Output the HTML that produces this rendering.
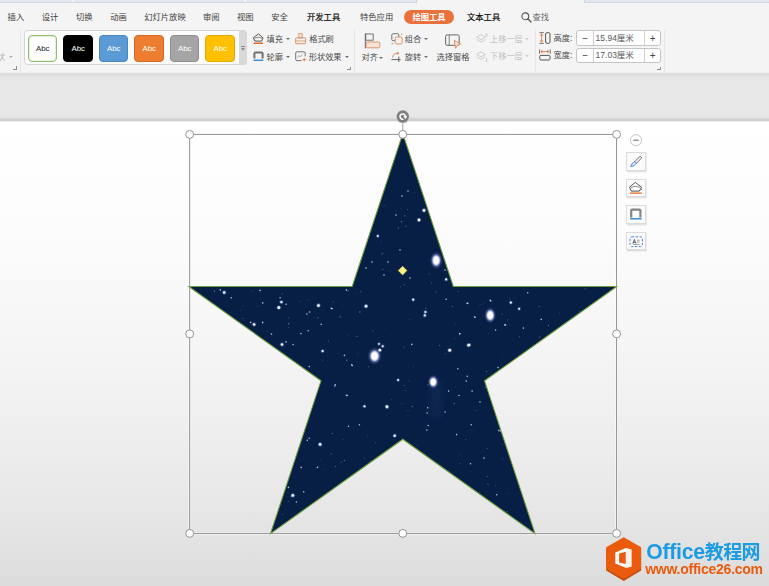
<!DOCTYPE html>
<html lang="zh-CN">
<head>
<meta charset="utf-8">
<title>WPS 演示 - 绘图工具</title>
<style>
html,body{margin:0;padding:0}
body{width:769px;height:586px;overflow:hidden;position:relative;background:#e8e8e8;
 font-family:"Liberation Sans","Noto Sans CJK SC",sans-serif;color:#3c3c3c;-webkit-font-smoothing:antialiased}
.abs,.t,.m,.sw,.sep,.dd,.dl{position:absolute}
#ribbon{left:0;top:0;width:769px;height:72.3px;background:#f4f4f4}
.strip{top:0;height:2.7px;background:linear-gradient(#e3e7f2 0,#e3e7f2 1.7px,#cdd3e3 2.2px,#d6dbe8 2.7px)}
.tick{top:0;width:1.6px;height:1.5px;background:#f6f7fb}
#bg{left:0;top:72px;width:769px;height:514px;background:linear-gradient(to bottom,#f4f4f4 0,#f4f4f4 .3px,#d9d9d9 1.6px,#e0e0e0 3.5px,#e7e7e7 6px,#e7e7e7 44.8px,#d8d8d8 46.8px,#c6c6c6 48.3px,#f0f0f0 49.5px,#fff 50.4px,#fcfcfc 158px,#f5f5f5 277px,#ededed 377px,#e7e7e7 436px,#dcdcdc 514px)}
/* menu */
.m{top:11px;height:12px;line-height:12px;font-size:8.3px;white-space:nowrap;color:#3c3c3c}
.m.b{font-weight:400;color:#0a0a0a;-webkit-text-stroke:.18px #0a0a0a}
#pill{left:404px;top:9.5px;width:50px;height:14px;border-radius:7px;background:#e8713c}
#pill span{position:absolute;left:0;width:50px;text-align:center;top:1px;line-height:12px;font-size:8.3px;font-weight:bold;color:#fff;white-space:nowrap}
/* ribbon labels */
.t{height:12px;line-height:12px;font-size:8.2px;white-space:nowrap;color:#4a4a4a;margin-top:.7px}
.t.g{color:#c2c2c2}
.sep{width:1px;top:30px;height:41px;background:#e6e6e6}
.dd{width:0;height:0;border-left:2px solid transparent;border-right:2px solid transparent;border-top:2.3px solid #6c6c6c}
.dd.g{border-top-color:#ccc}
.dl{width:2.8px;height:2.6px;border-right:1px solid #8c8c8c;border-bottom:1px solid #8c8c8c;border-radius:0 0 1px 0}
/* gallery */
#gal{left:24px;top:30.2px;width:223px;height:35px;box-sizing:border-box;border:1px solid #d4d4d4;border-radius:4px;background:#fcfcfc}
#galsb{left:239px;top:30.2px;width:8px;height:35px;background:#d9d9d9;border-radius:0 4px 4px 0}
.sw{top:34.8px;width:29.6px;height:27px;box-sizing:border-box;border-radius:4px;border:1px solid;text-align:center;line-height:25.4px;font-size:7.9px;color:#fff}
/* spinners */
.spin{position:absolute;left:576px;width:84.6px;height:15.6px;box-sizing:border-box;border:1px solid #c4c4c4;border-radius:3px;background:#fff}
.spin i{position:absolute;top:0;width:1px;height:13.6px;background:#d0d0d0}
.spin b{position:absolute;top:1.2px;height:13.2px;line-height:12.5px;font-weight:normal;font-size:10px;color:#444;width:15px;text-align:center}
.spin span{position:absolute;left:18.6px;top:.5px;height:13.2px;line-height:13.6px;font-size:8.5px;color:#585858;white-space:nowrap}
/* floating buttons */
.fb{position:absolute;left:626.4px;width:19.4px;height:18.4px;box-sizing:border-box;background:#fbfbfb;border:1px solid #dcdcdc;box-shadow:0.5px 1px 1.5px rgba(0,0,0,.18)}
.fb svg{position:absolute;left:0;top:0}
svg{overflow:visible}
</style>
</head>
<body>
<div id="bg" class="abs"></div>
<div id="ribbon" class="abs">
 <div class="abs strip" style="left:0;width:416px;border-right:1px solid #cdd3e3"></div>
 <div class="abs strip" style="left:584px;width:185px;border-left:1px solid #cdd3e3"></div>
 <div class="abs tick" style="left:72px"></div>
 <div class="abs tick" style="left:244px"></div>

 <!-- menu tabs -->
 <div class="m" style="left:7.6px">插入</div>
 <div class="m" style="left:41.8px">设计</div>
 <div class="m" style="left:76px">切换</div>
 <div class="m" style="left:110.2px">动画</div>
 <div class="m" style="left:144.2px">幻灯片放映</div>
 <div class="m" style="left:203px">审阅</div>
 <div class="m" style="left:237px">视图</div>
 <div class="m" style="left:271.3px">安全</div>
 <div class="m b" style="left:307px">开发工具</div>
 <div class="m" style="left:360px">特色应用</div>
 <div id="pill" class="abs"><span>绘图工具</span></div>
 <div class="m b" style="left:467px">文本工具</div>
 <svg class="abs" style="left:521px;top:11.5px" width="11" height="11" viewBox="0 0 11 11"><circle cx="4.3" cy="4.3" r="3.4" fill="none" stroke="#555" stroke-width="1.1"/><path d="M6.8 6.8 L10 10" stroke="#555" stroke-width="1.3" stroke-linecap="round"/></svg>
 <div class="m" style="left:532.4px;color:#6a6a6a">查找</div>

 <!-- left fragment -->
 <div class="t g" style="left:-3px;top:51px;color:#b4b4b4">状</div>
 <div class="dd g" style="left:8.8px;top:56px;border-top-color:#b0b0b0"></div>
 <div class="dl" style="left:13.2px;top:66.4px"></div>
 <div class="sep" style="left:20.1px"></div>

 <!-- style gallery -->
 <div id="gal" class="abs"></div>
 <div id="galsb" class="abs"></div>
 <svg class="abs" style="left:241px;top:45.5px" width="4" height="6" viewBox="0 0 4 6"><path d="M0 0.5H4" stroke="#777" stroke-width="0.8"/><path d="M0 2.2H4L2 4.6Z" fill="#777"/></svg>
 <div class="sw" style="left:27.9px;background:#fff;border-color:#8fc170;color:#222;box-shadow:inset 0 0 0 .8px #dcedd3">Abc</div>
 <div class="sw" style="left:63.4px;background:#000;border-color:#000">Abc</div>
 <div class="sw" style="left:98.9px;background:#5b9bd5;border-color:#4a87c2">Abc</div>
 <div class="sw" style="left:134.4px;background:#ed7d31;border-color:#d46a22">Abc</div>
 <div class="sw" style="left:169.9px;background:#a5a5a5;border-color:#8e8e8e">Abc</div>
 <div class="sw" style="left:205.4px;background:#ffc000;border-color:#e0a800">Abc</div>

 <!-- fill / outline / format painter / effects -->
 <svg class="abs" style="left:253px;top:32.5px" width="11" height="11" viewBox="0 0 11 11"><path d="M5.6 0.9 L10.1 5 L8.6 8.1 L1.9 8.1 L0.3 4.7 Z" fill="none" stroke="#555" stroke-width="1" stroke-linejoin="round"/><path d="M1.6 5.2 Q5 3.2 9 5.2" fill="none" stroke="#666" stroke-width="0.8"/><rect x="0.5" y="9.4" width="9.6" height="1.5" rx="0.5" fill="#ee6a1e"/></svg>
 <div class="t" style="left:266.6px;top:33.2px">填充</div>
 <div class="dd" style="left:286.2px;top:38px"></div>
 <svg class="abs" style="left:295.3px;top:32.5px" width="11" height="11" viewBox="0 0 11 11"><rect x="3.9" y="0.7" width="3.2" height="4.2" fill="none" stroke="#d68a5c" stroke-width="0.9"/><rect x="0.7" y="4.9" width="9.9" height="5.8" rx="0.6" fill="none" stroke="#d68a5c" stroke-width="0.9"/><path d="M0.7 8H10.6" stroke="#d68a5c" stroke-width="0.8"/></svg>
 <div class="t" style="left:309.2px;top:33.2px">格式刷</div>

 <svg class="abs" style="left:253px;top:51px" width="11" height="11" viewBox="0 0 11 11"><path d="M1.4 7.4 V2.4 Q1.4 1.4 2.4 1.4 H8.6 Q9.6 1.4 9.6 2.4 V7.4" fill="none" stroke="#707070" stroke-width="2"/><rect x="0.5" y="8.4" width="9.8" height="1.6" rx="0.5" fill="#3c8cdc"/></svg>
 <div class="t" style="left:266.6px;top:51px">轮廓</div>
 <div class="dd" style="left:286.2px;top:56px"></div>
 <svg class="abs" style="left:295.3px;top:51px" width="12" height="11" viewBox="0 0 12 11"><path d="M6.5 9.6 H1.9 Q0.7 9.6 0.7 8.4 V2 Q0.7 0.8 1.9 0.8 H9 Q10.2 0.8 10.2 2 V5.4" fill="none" stroke="#666" stroke-width="0.9"/><path d="M2.2 6.6 L4 4.6 L5.4 6 L7.2 3.6" fill="none" stroke="#888" stroke-width="0.7"/><path d="M9.2 6.4 L9.8 8 L11.4 8.6 L9.8 9.2 L9.2 10.8 L8.6 9.2 L7 8.6 L8.6 8 Z" fill="#e0763c"/></svg>
 <div class="t" style="left:308.8px;top:51px">形状效果</div>
 <div class="dd" style="left:344.6px;top:56px"></div>
 <div class="dl" style="left:347.2px;top:66.5px"></div>
 <div class="sep" style="left:354.2px"></div>

 <!-- align -->
 <svg class="abs" style="left:364px;top:32.5px" width="17" height="16" viewBox="0 0 17 16"><path d="M1.3 0.4 V15.4" stroke="#666" stroke-width="1"/><rect x="1.8" y="1" width="7.4" height="6.2" fill="none" stroke="#666" stroke-width="0.9"/><rect x="2.2" y="9" width="13.6" height="5.8" rx="1.2" fill="#f7e3d6" stroke="#d68a5c" stroke-width="0.9"/></svg>
 <div class="t" style="left:361.6px;top:51.6px">对齐</div>
 <div class="dd" style="left:379.4px;top:56.6px"></div>

 <!-- group / rotate -->
 <svg class="abs" style="left:391px;top:32.8px" width="12" height="12" viewBox="0 0 12 12"><rect x="0.8" y="0.7" width="7" height="7" rx="1.3" fill="none" stroke="#666" stroke-width="0.9"/><rect x="4.2" y="4" width="7" height="7" rx="1.3" fill="#fbf1ea" stroke="#d68a5c" stroke-width="0.9"/><circle cx="1.2" cy="10.6" r="0.6" fill="#666"/><circle cx="10.6" cy="1.2" r="0.6" fill="#d68a5c"/></svg>
 <div class="t" style="left:404.8px;top:33.3px">组合</div>
 <div class="dd" style="left:424.4px;top:38px"></div>
 <svg class="abs" style="left:391px;top:50.5px" width="12" height="12" viewBox="0 0 12 12"><path d="M1.6 6.6 Q2 2.2 7 2.2" fill="none" stroke="#d68a5c" stroke-width="1"/><path d="M6.2 0.5 L8.4 2.2 L6.2 3.9 Z" fill="#d68a5c"/><path d="M0.4 8.6 H9.6 M7.8 5.6 V11" stroke="#555" stroke-width="0.9"/></svg>
 <div class="t" style="left:404.8px;top:51.2px">旋转</div>
 <div class="dd" style="left:424.4px;top:56.2px"></div>

 <!-- selection pane -->
 <svg class="abs" style="left:445px;top:34px" width="17" height="16" viewBox="0 0 17 16"><rect x="0.6" y="0.9" width="13.6" height="10.4" rx="1.6" fill="none" stroke="#666" stroke-width="1"/><path d="M4.2 1V11.2" stroke="#666" stroke-width="0.8"/><path d="M9.2 6.2 L15.6 10.2 L12.4 11.2 L10.6 14.4 Z" fill="#f7e3d6" stroke="#d68a5c" stroke-width="0.9" stroke-linejoin="round"/></svg>
 <div class="t" style="left:436.6px;top:51.7px">选择窗格</div>

 <!-- layers -->
 <svg class="abs" style="left:475.6px;top:32.6px" width="13" height="12" viewBox="0 0 13 12"><path d="M5 1.6 L9.4 4.2 L5 6.8 L0.8 4.2 Z" fill="none" stroke="#cacaca" stroke-width="0.9"/><path d="M0.8 6.6 L5 9.2 L9.4 6.6" fill="none" stroke="#cacaca" stroke-width="0.9"/><path d="M10.6 4.4 V0.8 M9.4 2 L10.6 0.7 L11.8 2" fill="none" stroke="#cacaca" stroke-width="0.8"/></svg>
 <div class="t g" style="left:490px;top:33.5px">上移一层</div>
 <div class="dd g" style="left:525.4px;top:38.2px"></div>
 <svg class="abs" style="left:475.6px;top:50.6px" width="13" height="12" viewBox="0 0 13 12"><path d="M5 0.8 L9.4 3.4 L5 6 L0.8 3.4 Z" fill="none" stroke="#cacaca" stroke-width="0.9"/><path d="M0.8 5.8 L5 8.4 L9.4 5.8" fill="none" stroke="#cacaca" stroke-width="0.9"/><path d="M10.6 7 V10.8 M9.4 9.6 L10.6 10.9 L11.8 9.6" fill="none" stroke="#cacaca" stroke-width="0.8"/></svg>
 <div class="t g" style="left:490px;top:50.5px">下移一层</div>
 <div class="dd g" style="left:525.4px;top:55.4px"></div>
 <div class="sep" style="left:535px;top:29px;height:42px"></div>

 <!-- size -->
 <svg class="abs" style="left:539px;top:32px" width="12" height="12" viewBox="0 0 12 12"><path d="M0.4 0.6 H4.8 M0.4 11.4 H4.8" stroke="#666" stroke-width="0.9"/><path d="M2.6 2 V10" stroke="#e0763c" stroke-width="0.9"/><path d="M1.2 3.6 L2.6 1.8 L4 3.6 M1.2 8.4 L2.6 10.2 L4 8.4" fill="none" stroke="#e0763c" stroke-width="0.9"/><rect x="6.6" y="0.7" width="4.4" height="10.6" rx="1.3" fill="none" stroke="#555" stroke-width="1"/></svg>
 <div class="t" style="left:553.6px;top:32.8px">高度:</div>
 <svg class="abs" style="left:539px;top:49.2px" width="12" height="12" viewBox="0 0 12 12"><path d="M0.6 0.4 V4.8 M11.2 0.4 V4.8" stroke="#666" stroke-width="0.9"/><path d="M2 2.6 H9.8" stroke="#e0763c" stroke-width="0.9"/><path d="M3.6 1.2 L1.8 2.6 L3.6 4 M8.2 1.2 L10 2.6 L8.2 4" fill="none" stroke="#e0763c" stroke-width="0.9"/><rect x="0.7" y="6.4" width="10.4" height="4.6" rx="1.3" fill="none" stroke="#555" stroke-width="1"/></svg>
 <div class="t" style="left:553.6px;top:49.4px">宽度:</div>

 <div class="spin" style="top:30.4px"><b style="left:0.6px">−</b><i style="left:15.6px"></i><span>15.94厘米</span><i style="left:67.4px"></i><b style="left:68.2px">+</b></div>
 <div class="spin" style="top:47.6px"><b style="left:0.6px">−</b><i style="left:15.6px"></i><span>17.03厘米</span><i style="left:67.4px"></i><b style="left:68.2px">+</b></div>
 <div class="dl" style="left:657px;top:66.5px"></div>
 <div class="sep" style="left:664.4px"></div>
</div>
<svg class="abs" style="left:0;top:0" width="769" height="586" viewBox="0 0 769 586">
<defs><radialGradient id="gl"><stop offset="0" stop-color="#fff"/><stop offset="0.36" stop-color="#fff"/><stop offset="0.5" stop-color="#d6dbf7" stop-opacity="0.92"/><stop offset="0.7" stop-color="#7a80c6" stop-opacity="0.5"/><stop offset="1" stop-color="#39407a" stop-opacity="0"/></radialGradient>
<filter id="b1" x="-5%" y="-5%" width="110%" height="110%"><feGaussianBlur stdDeviation="0.4"/></filter><filter id="b2" x="-50%" y="-50%" width="200%" height="200%"><feGaussianBlur stdDeviation="3"/></filter>
<clipPath id="sc"><polygon points="402.8,133.7 453.3,286.5 616.8,286.5 484.5,380.8 535.0,533.6 402.8,439.2 270.5,533.6 321.0,380.8 188.7,286.5 352.2,286.5"/></clipPath></defs>
<rect x="189.66" y="134.40" width="426.90" height="399.03" fill="none" stroke="#fff" stroke-opacity="0.55" stroke-width="2.8"/>
<path d="M402.8 134.4 V117" stroke="#a0a0a0" stroke-width="1"/>
<polygon points="402.8,133.7 453.3,286.5 616.8,286.5 484.5,380.8 535.0,533.6 402.8,439.2 270.5,533.6 321.0,380.8 188.7,286.5 352.2,286.5" fill="#071f45" stroke="#6f9f3a" stroke-width="1.05" stroke-linejoin="miter"/>
<g clip-path="url(#sc)">
<ellipse cx="436" cy="398" rx="7" ry="22" fill="#2a4474" opacity="0.22" filter="url(#b2)"/>
<g filter="url(#b1)">
<circle cx="418.1" cy="279.9" r="0.37" fill="#b9c6e4" opacity="0.43"/>
<circle cx="435.8" cy="292.3" r="0.69" fill="#b9c6e4" opacity="0.27"/>
<circle cx="320.8" cy="460.1" r="0.41" fill="#b9c6e4" opacity="0.45"/>
<circle cx="480.0" cy="304.7" r="0.46" fill="#b9c6e4" opacity="0.45"/>
<circle cx="382.7" cy="253.6" r="0.63" fill="#b9c6e4" opacity="0.49"/>
<circle cx="367.7" cy="436.5" r="0.40" fill="#b9c6e4" opacity="0.42"/>
<circle cx="486.4" cy="371.4" r="0.55" fill="#b9c6e4" opacity="0.41"/>
<circle cx="391.7" cy="399.3" r="0.37" fill="#b9c6e4" opacity="0.50"/>
<circle cx="353.9" cy="401.1" r="0.36" fill="#b9c6e4" opacity="0.41"/>
<circle cx="307.9" cy="299.8" r="0.48" fill="#b9c6e4" opacity="0.56"/>
<circle cx="288.6" cy="327.6" r="0.56" fill="#b9c6e4" opacity="0.34"/>
<circle cx="346.8" cy="360.2" r="0.68" fill="#b9c6e4" opacity="0.49"/>
<circle cx="409.4" cy="380.7" r="0.59" fill="#b9c6e4" opacity="0.27"/>
<circle cx="356.7" cy="293.3" r="0.39" fill="#b9c6e4" opacity="0.47"/>
<circle cx="388.2" cy="327.2" r="0.38" fill="#b9c6e4" opacity="0.29"/>
<circle cx="414.8" cy="192.3" r="0.54" fill="#b9c6e4" opacity="0.26"/>
<circle cx="416.7" cy="445.2" r="0.47" fill="#b9c6e4" opacity="0.33"/>
<circle cx="285.8" cy="340.7" r="0.47" fill="#b9c6e4" opacity="0.26"/>
<circle cx="548.5" cy="325.4" r="0.58" fill="#b9c6e4" opacity="0.53"/>
<circle cx="509.8" cy="324.9" r="0.41" fill="#b9c6e4" opacity="0.53"/>
<circle cx="331.1" cy="453.9" r="0.69" fill="#b9c6e4" opacity="0.39"/>
<circle cx="338.7" cy="353.1" r="0.40" fill="#b9c6e4" opacity="0.25"/>
<circle cx="299.7" cy="301.3" r="0.40" fill="#b9c6e4" opacity="0.57"/>
<circle cx="340.2" cy="316.9" r="0.55" fill="#b9c6e4" opacity="0.57"/>
<circle cx="403.5" cy="346.4" r="0.53" fill="#b9c6e4" opacity="0.26"/>
<circle cx="262.5" cy="323.0" r="0.60" fill="#b9c6e4" opacity="0.44"/>
<circle cx="328.3" cy="341.0" r="0.54" fill="#b9c6e4" opacity="0.52"/>
<circle cx="519.3" cy="336.7" r="0.55" fill="#b9c6e4" opacity="0.52"/>
<circle cx="579.3" cy="311.0" r="0.56" fill="#b9c6e4" opacity="0.43"/>
<circle cx="408.0" cy="410.7" r="0.51" fill="#b9c6e4" opacity="0.44"/>
<circle cx="488.0" cy="484.2" r="0.68" fill="#b9c6e4" opacity="0.34"/>
<circle cx="240.8" cy="310.5" r="0.38" fill="#b9c6e4" opacity="0.33"/>
<circle cx="282.7" cy="514.6" r="0.49" fill="#b9c6e4" opacity="0.42"/>
<circle cx="257.8" cy="306.3" r="0.53" fill="#b9c6e4" opacity="0.37"/>
<circle cx="425.9" cy="309.8" r="0.36" fill="#b9c6e4" opacity="0.37"/>
<circle cx="455.8" cy="338.6" r="0.37" fill="#b9c6e4" opacity="0.59"/>
<circle cx="526.2" cy="522.3" r="0.39" fill="#b9c6e4" opacity="0.34"/>
<circle cx="433.0" cy="413.8" r="0.38" fill="#b9c6e4" opacity="0.27"/>
<circle cx="483.3" cy="303.8" r="0.38" fill="#b9c6e4" opacity="0.58"/>
<circle cx="460.3" cy="454.3" r="0.38" fill="#b9c6e4" opacity="0.55"/>
<circle cx="383.0" cy="269.3" r="0.54" fill="#b9c6e4" opacity="0.57"/>
<circle cx="414.3" cy="229.1" r="0.39" fill="#b9c6e4" opacity="0.31"/>
<circle cx="402.8" cy="204.8" r="0.47" fill="#b9c6e4" opacity="0.26"/>
<circle cx="502.5" cy="354.1" r="0.42" fill="#b9c6e4" opacity="0.42"/>
<circle cx="539.3" cy="306.5" r="0.52" fill="#b9c6e4" opacity="0.54"/>
<circle cx="357.0" cy="336.3" r="0.59" fill="#b9c6e4" opacity="0.59"/>
<circle cx="335.4" cy="466.5" r="0.60" fill="#b9c6e4" opacity="0.47"/>
<circle cx="362.0" cy="272.7" r="0.37" fill="#b9c6e4" opacity="0.30"/>
<circle cx="314.2" cy="317.4" r="0.41" fill="#b9c6e4" opacity="0.41"/>
<circle cx="391.9" cy="334.8" r="0.42" fill="#b9c6e4" opacity="0.43"/>
<circle cx="227.1" cy="293.5" r="0.36" fill="#b9c6e4" opacity="0.26"/>
<circle cx="439.4" cy="345.3" r="0.61" fill="#b9c6e4" opacity="0.48"/>
<circle cx="495.2" cy="485.2" r="0.49" fill="#b9c6e4" opacity="0.36"/>
<circle cx="502.9" cy="458.5" r="0.40" fill="#b9c6e4" opacity="0.43"/>
<circle cx="481.0" cy="411.0" r="0.43" fill="#b9c6e4" opacity="0.26"/>
<circle cx="427.8" cy="384.7" r="0.57" fill="#b9c6e4" opacity="0.49"/>
<circle cx="404.0" cy="347.7" r="0.58" fill="#b9c6e4" opacity="0.27"/>
<circle cx="400.2" cy="286.7" r="0.52" fill="#b9c6e4" opacity="0.49"/>
<circle cx="476.4" cy="410.5" r="0.59" fill="#b9c6e4" opacity="0.35"/>
<circle cx="409.8" cy="319.5" r="0.51" fill="#b9c6e4" opacity="0.29"/>
<circle cx="381.1" cy="241.1" r="0.42" fill="#b9c6e4" opacity="0.58"/>
<circle cx="539.8" cy="337.1" r="0.66" fill="#b9c6e4" opacity="0.50"/>
<circle cx="287.8" cy="492.7" r="0.52" fill="#b9c6e4" opacity="0.26"/>
<circle cx="381.7" cy="254.5" r="0.40" fill="#b9c6e4" opacity="0.37"/>
<circle cx="324.0" cy="469.7" r="0.35" fill="#b9c6e4" opacity="0.51"/>
<circle cx="348.0" cy="290.8" r="0.70" fill="#b9c6e4" opacity="0.46"/>
<circle cx="343.1" cy="304.9" r="0.45" fill="#b9c6e4" opacity="0.27"/>
<circle cx="407.4" cy="209.6" r="0.48" fill="#b9c6e4" opacity="0.58"/>
<circle cx="502.2" cy="314.0" r="0.61" fill="#b9c6e4" opacity="0.48"/>
<circle cx="390.8" cy="271.1" r="0.45" fill="#b9c6e4" opacity="0.51"/>
<circle cx="427.3" cy="291.4" r="0.41" fill="#b9c6e4" opacity="0.31"/>
<circle cx="401.5" cy="221.7" r="0.67" fill="#b9c6e4" opacity="0.60"/>
<circle cx="509.6" cy="298.8" r="0.49" fill="#b9c6e4" opacity="0.43"/>
<circle cx="404.2" cy="385.5" r="0.65" fill="#b9c6e4" opacity="0.33"/>
<circle cx="359.8" cy="312.0" r="0.68" fill="#b9c6e4" opacity="0.55"/>
<circle cx="412.3" cy="406.5" r="0.68" fill="#b9c6e4" opacity="0.50"/>
<circle cx="465.8" cy="439.5" r="0.51" fill="#b9c6e4" opacity="0.44"/>
<circle cx="288.3" cy="501.6" r="0.58" fill="#b9c6e4" opacity="0.36"/>
<circle cx="461.1" cy="413.1" r="0.39" fill="#b9c6e4" opacity="0.27"/>
<circle cx="413.2" cy="366.8" r="0.49" fill="#b9c6e4" opacity="0.33"/>
<circle cx="317.8" cy="317.9" r="0.69" fill="#b9c6e4" opacity="0.48"/>
<circle cx="402.0" cy="403.4" r="0.50" fill="#b9c6e4" opacity="0.34"/>
<circle cx="333.4" cy="301.9" r="0.59" fill="#b9c6e4" opacity="0.32"/>
<circle cx="404.8" cy="215.8" r="0.69" fill="#b9c6e4" opacity="0.36"/>
<circle cx="400.9" cy="208.6" r="0.43" fill="#b9c6e4" opacity="0.40"/>
<circle cx="251.4" cy="291.0" r="0.42" fill="#b9c6e4" opacity="0.59"/>
<circle cx="214.4" cy="291.0" r="0.66" fill="#b9c6e4" opacity="0.56"/>
<circle cx="341.4" cy="462.2" r="0.64" fill="#b9c6e4" opacity="0.40"/>
<circle cx="364.6" cy="458.3" r="0.62" fill="#b9c6e4" opacity="0.26"/>
<circle cx="508.6" cy="493.0" r="0.47" fill="#b9c6e4" opacity="0.35"/>
<circle cx="288.8" cy="323.7" r="0.68" fill="#b9c6e4" opacity="0.58"/>
<circle cx="372.8" cy="331.0" r="0.67" fill="#b9c6e4" opacity="0.31"/>
<circle cx="492.6" cy="312.4" r="0.43" fill="#b9c6e4" opacity="0.40"/>
<circle cx="454.3" cy="403.3" r="0.61" fill="#b9c6e4" opacity="0.55"/>
<circle cx="431.4" cy="282.9" r="0.61" fill="#b9c6e4" opacity="0.32"/>
<circle cx="436.3" cy="264.2" r="0.49" fill="#b9c6e4" opacity="0.60"/>
<circle cx="405.9" cy="226.2" r="0.63" fill="#b9c6e4" opacity="0.48"/>
<circle cx="559.5" cy="313.3" r="0.44" fill="#b9c6e4" opacity="0.52"/>
<circle cx="443.9" cy="381.6" r="0.43" fill="#b9c6e4" opacity="0.38"/>
<circle cx="357.9" cy="353.7" r="0.57" fill="#b9c6e4" opacity="0.28"/>
<circle cx="322.4" cy="360.3" r="0.48" fill="#b9c6e4" opacity="0.40"/>
<circle cx="370.1" cy="461.8" r="0.49" fill="#b9c6e4" opacity="0.56"/>
<circle cx="386.0" cy="198.7" r="0.36" fill="#b9c6e4" opacity="0.44"/>
<circle cx="347.5" cy="335.4" r="0.40" fill="#b9c6e4" opacity="0.35"/>
<circle cx="585.2" cy="288.8" r="0.67" fill="#b9c6e4" opacity="0.47"/>
<circle cx="282.1" cy="293.6" r="0.53" fill="#b9c6e4" opacity="0.38"/>
<circle cx="499.0" cy="492.5" r="0.36" fill="#b9c6e4" opacity="0.45"/>
<circle cx="445.4" cy="353.7" r="0.57" fill="#b9c6e4" opacity="0.36"/>
<circle cx="368.5" cy="366.7" r="0.50" fill="#b9c6e4" opacity="0.48"/>
<circle cx="380.0" cy="309.0" r="0.36" fill="#b9c6e4" opacity="0.47"/>
<circle cx="398.3" cy="227.8" r="0.62" fill="#b9c6e4" opacity="0.52"/>
<circle cx="384.9" cy="205.5" r="0.52" fill="#b9c6e4" opacity="0.29"/>
<circle cx="243.7" cy="305.9" r="0.38" fill="#b9c6e4" opacity="0.40"/>
<circle cx="407.1" cy="150.0" r="0.57" fill="#b9c6e4" opacity="0.28"/>
<circle cx="502.7" cy="444.7" r="0.53" fill="#b9c6e4" opacity="0.27"/>
<circle cx="404.4" cy="284.8" r="0.68" fill="#b9c6e4" opacity="0.30"/>
<circle cx="502.1" cy="459.6" r="0.42" fill="#b9c6e4" opacity="0.59"/>
<circle cx="405.3" cy="261.3" r="0.36" fill="#b9c6e4" opacity="0.31"/>
<circle cx="479.7" cy="491.8" r="0.41" fill="#b9c6e4" opacity="0.52"/>
<circle cx="458.3" cy="291.4" r="0.63" fill="#b9c6e4" opacity="0.34"/>
<circle cx="342.9" cy="439.5" r="0.50" fill="#b9c6e4" opacity="0.31"/>
<circle cx="439.5" cy="399.1" r="0.46" fill="#b9c6e4" opacity="0.25"/>
<circle cx="452.4" cy="306.5" r="0.53" fill="#b9c6e4" opacity="0.56"/>
<circle cx="455.8" cy="323.6" r="0.40" fill="#b9c6e4" opacity="0.58"/>
<circle cx="429.4" cy="273.8" r="0.58" fill="#b9c6e4" opacity="0.41"/>
<circle cx="295.1" cy="495.0" r="0.37" fill="#b9c6e4" opacity="0.44"/>
<circle cx="405.7" cy="390.3" r="0.63" fill="#b9c6e4" opacity="0.31"/>
<circle cx="507.7" cy="319.8" r="0.61" fill="#b9c6e4" opacity="0.41"/>
<circle cx="332.3" cy="433.5" r="0.59" fill="#b9c6e4" opacity="0.55"/>
<circle cx="425.8" cy="308.1" r="0.63" fill="#b9c6e4" opacity="0.43"/>
<circle cx="507.2" cy="511.5" r="0.61" fill="#b9c6e4" opacity="0.36"/>
<circle cx="291.1" cy="496.6" r="0.57" fill="#b9c6e4" opacity="0.49"/>
<circle cx="487.4" cy="476.6" r="0.50" fill="#b9c6e4" opacity="0.50"/>
<circle cx="432.9" cy="256.8" r="0.42" fill="#b9c6e4" opacity="0.47"/>
<circle cx="485.2" cy="387.2" r="0.59" fill="#b9c6e4" opacity="0.51"/>
<circle cx="344.3" cy="460.6" r="0.64" fill="#b9c6e4" opacity="0.56"/>
<circle cx="460.2" cy="463.6" r="0.57" fill="#b9c6e4" opacity="0.35"/>
<circle cx="325.3" cy="303.2" r="0.36" fill="#b9c6e4" opacity="0.34"/>
<circle cx="309.7" cy="419.9" r="0.48" fill="#b9c6e4" opacity="0.36"/>
<circle cx="375.5" cy="442.8" r="0.47" fill="#b9c6e4" opacity="0.50"/>
<circle cx="419.0" cy="220.3" r="0.65" fill="#b9c6e4" opacity="0.28"/>
<circle cx="267.7" cy="331.5" r="0.47" fill="#b9c6e4" opacity="0.54"/>
<circle cx="300.3" cy="511.2" r="0.45" fill="#b9c6e4" opacity="0.33"/>
<circle cx="488.1" cy="333.0" r="0.39" fill="#b9c6e4" opacity="0.47"/>
<circle cx="487.2" cy="448.4" r="0.57" fill="#b9c6e4" opacity="0.37"/>
<circle cx="360.5" cy="291.5" r="0.66" fill="#b9c6e4" opacity="0.28"/>
<circle cx="288.7" cy="318.0" r="0.54" fill="#b9c6e4" opacity="0.51"/>
<circle cx="472.1" cy="430.4" r="0.41" fill="#b9c6e4" opacity="0.40"/>
<circle cx="242.7" cy="318.5" r="0.66" fill="#b9c6e4" opacity="0.33"/>
<circle cx="489.7" cy="471.1" r="0.40" fill="#b9c6e4" opacity="0.30"/>
<circle cx="331.3" cy="308.4" r="0.8" fill="#cdd8ef" opacity="0.85"/>
<circle cx="411.8" cy="344.4" r="0.8" fill="#cdd8ef" opacity="0.85"/>
<circle cx="459.7" cy="333.7" r="0.8" fill="#cdd8ef" opacity="0.85"/>
<circle cx="467.8" cy="303.2" r="0.8" fill="#cdd8ef" opacity="0.85"/>
<circle cx="490.1" cy="300.3" r="0.8" fill="#cdd8ef" opacity="0.85"/>
<circle cx="510.4" cy="302.6" r="0.8" fill="#cdd8ef" opacity="0.85"/>
<circle cx="504.6" cy="325.0" r="0.8" fill="#cdd8ef" opacity="0.85"/>
<circle cx="475.0" cy="317.2" r="0.8" fill="#cdd8ef" opacity="0.85"/>
<circle cx="352.2" cy="365.6" r="0.8" fill="#cdd8ef" opacity="0.85"/>
<circle cx="334.8" cy="386.0" r="0.8" fill="#cdd8ef" opacity="0.85"/>
<circle cx="347.3" cy="395.5" r="0.8" fill="#cdd8ef" opacity="0.85"/>
<circle cx="427.7" cy="407.7" r="0.8" fill="#cdd8ef" opacity="0.85"/>
<circle cx="427.1" cy="413.0" r="0.8" fill="#cdd8ef" opacity="0.85"/>
<circle cx="426.9" cy="430.0" r="0.8" fill="#cdd8ef" opacity="0.85"/>
<circle cx="394.3" cy="436.2" r="0.8" fill="#cdd8ef" opacity="0.85"/>
<circle cx="307.3" cy="440.2" r="0.8" fill="#cdd8ef" opacity="0.85"/>
<circle cx="459.0" cy="395.5" r="0.8" fill="#cdd8ef" opacity="0.85"/>
<circle cx="466.3" cy="381.0" r="0.8" fill="#cdd8ef" opacity="0.85"/>
<circle cx="445.1" cy="412.0" r="0.8" fill="#cdd8ef" opacity="0.85"/>
<circle cx="480.0" cy="402.0" r="0.8" fill="#cdd8ef" opacity="0.85"/>
<circle cx="498.8" cy="430.4" r="0.8" fill="#cdd8ef" opacity="0.85"/>
<circle cx="309.2" cy="438.2" r="0.8" fill="#cdd8ef" opacity="0.85"/>
<circle cx="348.5" cy="426.2" r="0.8" fill="#cdd8ef" opacity="0.85"/>
<circle cx="359.4" cy="424.8" r="0.8" fill="#cdd8ef" opacity="0.85"/>
<circle cx="364.9" cy="406.6" r="0.8" fill="#cdd8ef" opacity="0.85"/>
<circle cx="428.2" cy="425.5" r="0.8" fill="#cdd8ef" opacity="0.85"/>
<circle cx="317.5" cy="467.4" r="0.8" fill="#cdd8ef" opacity="0.85"/>
<circle cx="301.2" cy="467.4" r="0.8" fill="#cdd8ef" opacity="0.85"/>
<circle cx="288.4" cy="487.4" r="0.8" fill="#cdd8ef" opacity="0.85"/>
<circle cx="303.7" cy="491.8" r="0.8" fill="#cdd8ef" opacity="0.85"/>
<circle cx="296.4" cy="502.0" r="0.8" fill="#cdd8ef" opacity="0.85"/>
<circle cx="456.6" cy="434.6" r="0.8" fill="#cdd8ef" opacity="0.85"/>
<circle cx="471.2" cy="424.8" r="0.8" fill="#cdd8ef" opacity="0.85"/>
<circle cx="500.3" cy="431.0" r="0.8" fill="#cdd8ef" opacity="0.85"/>
<circle cx="470.5" cy="463.7" r="0.8" fill="#cdd8ef" opacity="0.85"/>
<circle cx="496.7" cy="494.7" r="0.8" fill="#cdd8ef" opacity="0.85"/>
<circle cx="484.0" cy="458.0" r="0.8" fill="#cdd8ef" opacity="0.85"/>
<circle cx="446.2" cy="299.2" r="0.8" fill="#cdd8ef" opacity="0.85"/>
<circle cx="467.2" cy="303.4" r="0.8" fill="#cdd8ef" opacity="0.85"/>
<circle cx="490.7" cy="300.9" r="0.8" fill="#cdd8ef" opacity="0.85"/>
<circle cx="527.7" cy="292.7" r="0.8" fill="#cdd8ef" opacity="0.85"/>
<circle cx="541.3" cy="319.4" r="0.8" fill="#cdd8ef" opacity="0.85"/>
<circle cx="523.3" cy="328.1" r="0.8" fill="#cdd8ef" opacity="0.85"/>
<circle cx="505.5" cy="324.9" r="0.8" fill="#cdd8ef" opacity="0.85"/>
<circle cx="495.6" cy="330.0" r="0.8" fill="#cdd8ef" opacity="0.85"/>
<circle cx="474.6" cy="317.0" r="0.8" fill="#cdd8ef" opacity="0.85"/>
<circle cx="459.8" cy="333.8" r="0.8" fill="#cdd8ef" opacity="0.85"/>
<circle cx="498.1" cy="367.6" r="0.8" fill="#cdd8ef" opacity="0.85"/>
<circle cx="457.8" cy="368.8" r="0.8" fill="#cdd8ef" opacity="0.85"/>
<circle cx="467.2" cy="376.3" r="0.8" fill="#cdd8ef" opacity="0.85"/>
<circle cx="472.1" cy="391.1" r="0.8" fill="#cdd8ef" opacity="0.85"/>
<circle cx="448.6" cy="391.1" r="0.8" fill="#cdd8ef" opacity="0.85"/>
<circle cx="220.3" cy="289.9" r="0.8" fill="#cdd8ef" opacity="0.85"/>
<circle cx="231.2" cy="297.7" r="0.8" fill="#cdd8ef" opacity="0.85"/>
<circle cx="250.7" cy="322.4" r="0.8" fill="#cdd8ef" opacity="0.85"/>
<circle cx="262.7" cy="322.4" r="0.8" fill="#cdd8ef" opacity="0.85"/>
<circle cx="280.1" cy="297.7" r="0.8" fill="#cdd8ef" opacity="0.85"/>
<circle cx="286.1" cy="304.2" r="0.8" fill="#cdd8ef" opacity="0.85"/>
<circle cx="262.7" cy="302.9" r="0.8" fill="#cdd8ef" opacity="0.85"/>
<circle cx="260.1" cy="290.4" r="0.8" fill="#cdd8ef" opacity="0.85"/>
<circle cx="332.1" cy="308.6" r="0.8" fill="#cdd8ef" opacity="0.85"/>
<circle cx="309.5" cy="312.0" r="0.8" fill="#cdd8ef" opacity="0.85"/>
<circle cx="306.9" cy="314.1" r="0.8" fill="#cdd8ef" opacity="0.85"/>
<circle cx="321.2" cy="324.2" r="0.8" fill="#cdd8ef" opacity="0.85"/>
<circle cx="308.2" cy="330.7" r="0.8" fill="#cdd8ef" opacity="0.85"/>
<circle cx="300.9" cy="333.6" r="0.8" fill="#cdd8ef" opacity="0.85"/>
<circle cx="286.1" cy="341.9" r="0.8" fill="#cdd8ef" opacity="0.85"/>
<circle cx="293.1" cy="344.5" r="0.8" fill="#cdd8ef" opacity="0.85"/>
<circle cx="271.5" cy="334.1" r="0.8" fill="#cdd8ef" opacity="0.85"/>
<circle cx="322.5" cy="351.0" r="0.8" fill="#cdd8ef" opacity="0.85"/>
<circle cx="309.3" cy="366.6" r="0.8" fill="#cdd8ef" opacity="0.85"/>
<circle cx="344.4" cy="355.4" r="0.8" fill="#cdd8ef" opacity="0.85"/>
<circle cx="351.7" cy="364.8" r="0.8" fill="#cdd8ef" opacity="0.85"/>
<circle cx="346.4" cy="289.9" r="0.8" fill="#cdd8ef" opacity="0.85"/>
<circle cx="335.3" cy="384.8" r="0.8" fill="#cdd8ef" opacity="0.85"/>
<circle cx="346.4" cy="395.2" r="0.8" fill="#cdd8ef" opacity="0.85"/>
<circle cx="402.0" cy="196.0" r="0.8" fill="#cdd8ef" opacity="0.85"/>
<circle cx="408.0" cy="191.0" r="0.8" fill="#cdd8ef" opacity="0.85"/>
<circle cx="396.0" cy="215.0" r="0.8" fill="#cdd8ef" opacity="0.85"/>
<circle cx="388.0" cy="262.0" r="0.8" fill="#cdd8ef" opacity="0.85"/>
<circle cx="372.0" cy="262.0" r="0.8" fill="#cdd8ef" opacity="0.85"/>
<circle cx="366.0" cy="268.0" r="0.8" fill="#cdd8ef" opacity="0.85"/>
<circle cx="384.0" cy="275.0" r="0.8" fill="#cdd8ef" opacity="0.85"/>
<circle cx="410.0" cy="278.0" r="0.8" fill="#cdd8ef" opacity="0.85"/>
<circle cx="445.0" cy="270.0" r="0.8" fill="#cdd8ef" opacity="0.85"/>
<circle cx="400.0" cy="250.0" r="0.8" fill="#cdd8ef" opacity="0.85"/>
<circle cx="424.0" cy="210.4" r="2.3" fill="#8aa0d0" opacity="0.35"/><circle cx="424.0" cy="210.4" r="1.4" fill="#f2f5ff"/>
<circle cx="419.0" cy="220.0" r="2.3" fill="#8aa0d0" opacity="0.35"/><circle cx="419.0" cy="220.0" r="1.4" fill="#f2f5ff"/>
<circle cx="377.8" cy="236.0" r="1.9" fill="#8aa0d0" opacity="0.35"/><circle cx="377.8" cy="236.0" r="1.0" fill="#f2f5ff"/>
<circle cx="224.2" cy="292.5" r="2.2" fill="#8aa0d0" opacity="0.35"/><circle cx="224.2" cy="292.5" r="1.3" fill="#f2f5ff"/>
<circle cx="254.1" cy="324.5" r="2.2" fill="#8aa0d0" opacity="0.35"/><circle cx="254.1" cy="324.5" r="1.3" fill="#f2f5ff"/>
<circle cx="278.8" cy="307.6" r="2.4" fill="#8aa0d0" opacity="0.35"/><circle cx="278.8" cy="307.6" r="1.5" fill="#f2f5ff"/>
<circle cx="281.4" cy="302.1" r="2.1" fill="#8aa0d0" opacity="0.35"/><circle cx="281.4" cy="302.1" r="1.2" fill="#f2f5ff"/>
<circle cx="318.6" cy="305.5" r="2.2" fill="#8aa0d0" opacity="0.35"/><circle cx="318.6" cy="305.5" r="1.3" fill="#f2f5ff"/>
<circle cx="282.0" cy="344.5" r="2.2" fill="#8aa0d0" opacity="0.35"/><circle cx="282.0" cy="344.5" r="1.3" fill="#f2f5ff"/>
<circle cx="366.0" cy="306.3" r="2.2" fill="#8aa0d0" opacity="0.35"/><circle cx="366.0" cy="306.3" r="1.3" fill="#f2f5ff"/>
<circle cx="379.8" cy="350.2" r="2.3" fill="#8aa0d0" opacity="0.35"/><circle cx="379.8" cy="350.2" r="1.4" fill="#f2f5ff"/>
<circle cx="382.7" cy="346.2" r="1.9" fill="#8aa0d0" opacity="0.35"/><circle cx="382.7" cy="346.2" r="1.0" fill="#f2f5ff"/>
<circle cx="379.0" cy="343.9" r="1.8" fill="#8aa0d0" opacity="0.35"/><circle cx="379.0" cy="343.9" r="0.9" fill="#f2f5ff"/>
<circle cx="425.4" cy="312.0" r="2.0" fill="#8aa0d0" opacity="0.35"/><circle cx="425.4" cy="312.0" r="1.1" fill="#f2f5ff"/>
<circle cx="424.8" cy="315.4" r="2.0" fill="#8aa0d0" opacity="0.35"/><circle cx="424.8" cy="315.4" r="1.1" fill="#f2f5ff"/>
<circle cx="449.5" cy="350.2" r="2.1" fill="#8aa0d0" opacity="0.35"/><circle cx="449.5" cy="350.2" r="1.2" fill="#f2f5ff"/>
<circle cx="468.4" cy="345.3" r="2.1" fill="#8aa0d0" opacity="0.35"/><circle cx="468.4" cy="345.3" r="1.2" fill="#f2f5ff"/>
<circle cx="387.1" cy="406.9" r="2.2" fill="#8aa0d0" opacity="0.35"/><circle cx="387.1" cy="406.9" r="1.3" fill="#f2f5ff"/>
<circle cx="320.1" cy="444.4" r="2.3" fill="#8aa0d0" opacity="0.35"/><circle cx="320.1" cy="444.4" r="1.4" fill="#f2f5ff"/>
<circle cx="292.8" cy="495.4" r="2.3" fill="#8aa0d0" opacity="0.35"/><circle cx="292.8" cy="495.4" r="1.4" fill="#f2f5ff"/>
<circle cx="394.7" cy="435.7" r="2.1" fill="#8aa0d0" opacity="0.35"/><circle cx="394.7" cy="435.7" r="1.2" fill="#f2f5ff"/>
<circle cx="322.6" cy="351.1" r="2.0" fill="#8aa0d0" opacity="0.35"/><circle cx="322.6" cy="351.1" r="1.1" fill="#f2f5ff"/>
<circle cx="318.3" cy="305.5" r="2.0" fill="#8aa0d0" opacity="0.35"/><circle cx="318.3" cy="305.5" r="1.1" fill="#f2f5ff"/>
<circle cx="366.2" cy="306.1" r="2.0" fill="#8aa0d0" opacity="0.35"/><circle cx="366.2" cy="306.1" r="1.1" fill="#f2f5ff"/>
<circle cx="413.2" cy="299.7" r="2.0" fill="#8aa0d0" opacity="0.35"/><circle cx="413.2" cy="299.7" r="1.1" fill="#f2f5ff"/>
<circle cx="398.1" cy="380.1" r="1.9" fill="#8aa0d0" opacity="0.35"/><circle cx="398.1" cy="380.1" r="1.0" fill="#f2f5ff"/>
<circle cx="364.4" cy="406.3" r="1.9" fill="#8aa0d0" opacity="0.35"/><circle cx="364.4" cy="406.3" r="1.0" fill="#f2f5ff"/>
<circle cx="469.2" cy="344.9" r="2.1" fill="#8aa0d0" opacity="0.35"/><circle cx="469.2" cy="344.9" r="1.2" fill="#f2f5ff"/>
<circle cx="449.9" cy="350.3" r="2.1" fill="#8aa0d0" opacity="0.35"/><circle cx="449.9" cy="350.3" r="1.2" fill="#f2f5ff"/>
<circle cx="510.9" cy="302.6" r="2.0" fill="#8aa0d0" opacity="0.35"/><circle cx="510.9" cy="302.6" r="1.1" fill="#f2f5ff"/>
<circle cx="519.1" cy="308.8" r="1.9" fill="#8aa0d0" opacity="0.35"/><circle cx="519.1" cy="308.8" r="1.0" fill="#f2f5ff"/>
<circle cx="446.2" cy="279.4" r="2.0" fill="#8aa0d0" opacity="0.35"/><circle cx="446.2" cy="279.4" r="1.1" fill="#f2f5ff"/>
<circle cx="386.7" cy="406.6" r="2.0" fill="#8aa0d0" opacity="0.35"/><circle cx="386.7" cy="406.6" r="1.1" fill="#f2f5ff"/>
</g>
<ellipse cx="436.2" cy="260.4" rx="6.5" ry="8.9" fill="url(#gl)"/>
<ellipse cx="374.6" cy="356.0" rx="7.2" ry="8.9" fill="url(#gl)"/>
<ellipse cx="433.2" cy="381.9" rx="5.8" ry="7.4" fill="url(#gl)"/>
<ellipse cx="490.2" cy="315.3" rx="6.2" ry="8.4" fill="url(#gl)"/>
</g>
<rect x="189.66" y="134.40" width="426.90" height="399.03" fill="none" stroke="#929292" stroke-width="1"/>
<path d="M402.6 266.3 L406.9 270.6 L402.6 274.9 L398.3 270.6 Z" fill="#fbf37a" stroke="#fbf37a" stroke-width="0.5" stroke-linejoin="round"/>
<circle cx="189.7" cy="134.4" r="3.95" fill="#fff" stroke="#8e8e8e" stroke-width="0.95"/>
<circle cx="402.8" cy="134.4" r="3.95" fill="#fff" stroke="#8e8e8e" stroke-width="0.95"/>
<circle cx="616.6" cy="134.4" r="3.95" fill="#fff" stroke="#8e8e8e" stroke-width="0.95"/>
<circle cx="189.7" cy="333.9" r="3.95" fill="#fff" stroke="#8e8e8e" stroke-width="0.95"/>
<circle cx="616.6" cy="333.9" r="3.95" fill="#fff" stroke="#8e8e8e" stroke-width="0.95"/>
<circle cx="189.7" cy="533.4" r="3.95" fill="#fff" stroke="#8e8e8e" stroke-width="0.95"/>
<circle cx="402.8" cy="533.4" r="3.95" fill="#fff" stroke="#8e8e8e" stroke-width="0.95"/>
<circle cx="616.6" cy="533.4" r="3.95" fill="#fff" stroke="#8e8e8e" stroke-width="0.95"/>
<circle cx="402.8" cy="116.6" r="6.5" fill="#808080" stroke="#f4f4f4" stroke-opacity="0.55" stroke-width="0.8"/>
<path d="M405.4 116.9 A2.7 2.7 0 1 0 403.4 119.2" fill="none" stroke="#fff" stroke-width="1.5"/>
<path d="M403.4 116.2 H407.4 L405.4 119 Z" fill="#fff"/>
</svg>
<!-- floating quick tools -->
<svg class="abs" style="left:629px;top:133px" width="14" height="14" viewBox="0 0 14 14"><circle cx="7" cy="7.2" r="5.6" fill="#fdfdfd" stroke="#b9b9b9" stroke-width="0.8"/><path d="M4.3 7.2H9.7" stroke="#666" stroke-width="1"/></svg>
<div class="fb" style="top:152.2px"><svg width="18" height="17" viewBox="0 0 18 17"><path d="M13.2 3.2 L14.8 4.8 L9.4 10.2 L7.8 8.6 Z" fill="#fff" stroke="#555" stroke-width="0.9" stroke-linejoin="round"/><path d="M7.8 8.6 L9.4 10.2 Q7.6 13.6 3.6 13.6 Q4.6 10 7.8 8.6 Z" fill="#dfe9fb" stroke="#4a7fe0" stroke-width="0.9" stroke-linejoin="round"/></svg></div>
<div class="fb" style="top:178.6px"><svg width="18" height="17" viewBox="0 0 18 17"><path d="M8.3 2.4 L14.5 7.2 L12.4 11.1 L4.4 11.1 L2.5 7.2 Z" fill="#fff" stroke="#555" stroke-width="1" stroke-linejoin="round"/><path d="M3.8 7.6 Q8 4.8 13 7.4" fill="none" stroke="#666" stroke-width="0.8"/><path d="M14.6 8.2 Q15.7 9.8 14.7 10.3 Q13.7 9.8 14.6 8.2Z" fill="#555"/><rect x="2.8" y="12.4" width="12" height="1.4" rx="0.4" fill="#ee6a1e"/></svg></div>
<div class="fb" style="top:205.2px"><svg width="18" height="17" viewBox="0 0 18 17"><path d="M4.2 11.4 V4.6 Q4.2 3.6 5.2 3.6 H12.4 Q13.4 3.6 13.4 4.6 V11.4" fill="none" stroke="#858585" stroke-width="2.2"/><rect x="3.1" y="11.9" width="11.6" height="1.6" rx="0.4" fill="#3c8cdc"/></svg></div>
<div class="fb" style="top:231.6px"><svg width="18" height="17" viewBox="0 0 18 17"><rect x="3" y="3.8" width="12.4" height="9.8" rx="1.8" fill="none" stroke="#4a7fe0" stroke-width="1" stroke-dasharray="2.4 1.5"/><path d="M5.8 10.6 L7.4 6.4 L9 10.6 M6.3 9.3 H8.5" fill="none" stroke="#555" stroke-width="0.9"/><path d="M10 7.2 H12.6 M10 9 H12.6 M6 11.6 H12.6" stroke="#777" stroke-width="0.7"/></svg></div>

<!-- watermark -->
<svg class="abs" style="left:604px;top:535px" width="40" height="48" viewBox="0 0 40 48">
 <path d="M19.7 3.4 L37.1 13.4 L37.1 35.4 L19.7 45.9 L2.2 35.4 L2.2 13.4 Z" fill="#c24a0c"/>
 <path d="M19.7 2.2 L37.1 12.2 L37.1 33.8 L19.7 43.9 L2.2 33.8 L2.2 12.2 Z" fill="#ea5b0e"/>
 <path d="M11.3 17.4 L21.8 13.1 L27.5 14.6 L27.5 31.8 L21.8 32.7 L11.3 28.6 Z M15.1 18.6 L15.1 27.6 L21.8 28.9 L21.8 16.7 Z" fill="#fff" fill-rule="evenodd"/>
 <path d="M21.8 13.1 L27.5 14.6 L27.5 31.8 L21.8 32.7 Z" fill="#ffe9dc" opacity="0.55"/>
</svg>
<div class="abs" style="left:646.2px;top:539.2px;height:26px;line-height:26px;white-space:nowrap;color:#1b9be2;font-weight:bold;font-size:21.2px;letter-spacing:-0.25px">Office<span style="font-size:19px;letter-spacing:-0.6px;position:relative;top:-0.3px">教程网</span></div>
<div class="abs" style="left:645.2px;top:559.6px;height:18px;line-height:18px;white-space:nowrap;color:#ea5b0e;font-weight:bold;font-size:14px;letter-spacing:-0.25px">www.office26.com</div>
</body>
</html>
